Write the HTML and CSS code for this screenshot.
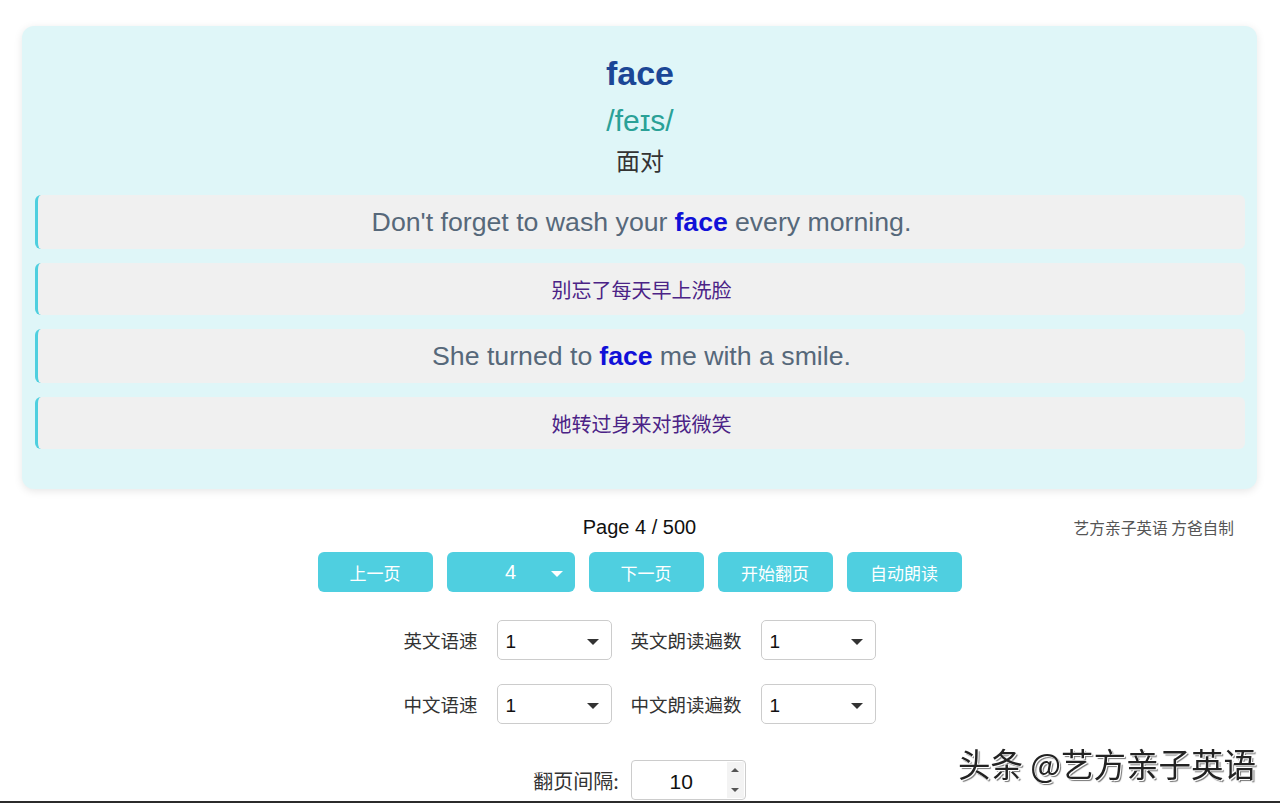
FILE: index.html
```html
<!doctype html>
<html>
<head>
  <title>Word Cards</title>
  <meta charset="utf-8">
  <link rel="stylesheet" href="styles.css">
</head>
<body>
  <div class="page">
    <div class="card">
      <div class="word">face</div>
      <div class="phonetic">/feɪs/</div>
      <div class="meaning">面对</div>
      <div class="row en">Don't forget to wash your <b>face</b> every morning.</div>
      <div class="row cn">别忘了每天早上洗脸</div>
      <div class="row en">She turned to <b>face</b> me with a smile.</div>
      <div class="row cn">她转过身来对我微笑</div>
    </div>

    <div class="info">
      <span></span>
      <span class="pageno">Page 4 / 500</span>
      <span class="credit">艺方亲子英语 方爸自制</span>
    </div>

    <div class="buttons">
      <div class="btn">上一页</div>
      <div class="btn pick">4<span class="caret white"></span></div>
      <div class="btn">下一页</div>
      <div class="btn">开始翻页</div>
      <div class="btn">自动朗读</div>
    </div>

    <div class="settings">
      <span class="label">英文语速</span>
      <div class="select">1<span class="caret"></span></div>
      <span class="label">英文朗读遍数</span>
      <div class="select">1<span class="caret"></span></div>
      <span class="label">中文语速</span>
      <div class="select">1<span class="caret"></span></div>
      <span class="label">中文朗读遍数</span>
      <div class="select">1<span class="caret"></span></div>
    </div>

    <div class="interval">
      <span class="label wide">翻页间隔:</span>
      <div class="number">
        <span class="val">10</span>
        <span class="spin"><i class="up"></i><i class="down"></i></span>
      </div>
    </div>
  </div>
  <div class="mark">头条 @艺方亲子英语</div>
  <div class="edge"></div>
</body>
</html>
```

FILE: styles.css
```css
body{
  margin: 0;
  background-color: #fff;
  font-family: "Liberation Sans", Arial, "Noto Sans CJK SC", sans-serif;
  overflow: hidden;
}
.page{
  padding: 26px 23px 0 22px;
}
.card{
  background-color: #dff6f8;
  border-radius: 12px;
  box-shadow: 0 2px 8px rgba(0,0,0,0.10);
  padding: 27px 12px 40px 13px;
  display: flex;
  flex-direction: column;
  align-items: stretch;
  text-align: center;
}
.word{
  font-size: 34px;
  line-height: 40px;
  font-weight: bold;
  color: #1b4696;
}
.phonetic{
  font-size: 30px;
  line-height: 34px;
  margin-top: 11px;
  color: #2aa197;
}
.meaning{
  font-size: 24px;
  line-height: 30px;
  margin-top: 7px;
  color: #333;
  font-family: "Noto Sans CJK SC", sans-serif;
}
.row{
  background-color: #f0f0f0;
  border-left: 3px solid #4ecfdf;
  border-radius: 6px;
  display: flex;
  align-items: center;
  justify-content: center;
  margin-top: 14px;
}
.meaning + .row{
  margin-top: 20px;
}
.row.en{
  height: 54px;
  font-size: 26.7px;
  color: #56687a;
}
.row.en b{
  color: #1010d8;
  margin: 0 7px;
}
.row.cn{
  height: 52px;
  font-size: 20px;
  color: #4b2386;
  font-family: "Noto Sans CJK SC", sans-serif;
}
.info{
  display: grid;
  grid-template-columns: 1fr auto 1fr;
  align-items: center;
  margin-top: 25px;
  height: 26px;
}
.pageno{
  font-size: 20px;
  color: #111;
}
.credit{
  justify-self: end;
  font-size: 15.7px;
  color: #555;
  margin-right: 23px;
  font-family: "Noto Sans CJK SC", sans-serif;
}
.buttons{
  display: flex;
  justify-content: center;
  gap: 14px;
  margin-top: 12px;
}
.btn{
  width: 115px;
  height: 40px;
  border-radius: 6px;
  background-color: #4fcfe0;
  color: #fff;
  font-size: 17px;
  display: flex;
  align-items: center;
  justify-content: center;
  font-family: "Noto Sans CJK SC", sans-serif;
}
.btn.pick{
  width: 128px;
  position: relative;
  font-family: "Liberation Sans", Arial, sans-serif;
  font-size: 20px;
}
.caret{
  position: absolute;
  right: 12px;
  top: 18px;
  width: 0;
  height: 0;
  border-left: 6px solid transparent;
  border-right: 6px solid transparent;
  border-top: 6px solid #333;
}
.caret.white{
  border-top-color: #fff;
  top: 19px;
}
.settings{
  display: grid;
  grid-template-columns: auto 115px auto 115px;
  column-gap: 19px;
  row-gap: 24px;
  justify-content: center;
  align-items: center;
  margin-top: 28px;
}
.label{
  font-size: 18.5px;
  color: #333;
  text-align: right;
  font-family: "Noto Sans CJK SC", sans-serif;
}
.label.wide{
  font-size: 20px;
}
.select{
  position: relative;
  height: 40px;
  border: 1px solid #ccc;
  border-radius: 5px;
  font-size: 19px;
  color: #111;
  display: flex;
  align-items: center;
  padding-left: 8px;
  padding-top: 3px;
  box-sizing: border-box;
}
.select .caret{
  top: 18px;
}
.interval{
  display: flex;
  justify-content: center;
  align-items: center;
  gap: 12px;
  margin-top: 36px;
}
.number{
  width: 115px;
  height: 40px;
  box-sizing: border-box;
  border: 1px solid #ccc;
  border-radius: 4px;
  display: flex;
  align-items: center;
}
.number .val{
  flex: 1;
  text-align: center;
  font-size: 21px;
  color: #111;
  padding-top: 3px;
  padding-left: 4px;
}
.spin{
  width: 17px;
  height: 36px;
  margin-right: 1px;
  background-color: #f3f3f3;
  display: flex;
  flex-direction: column;
  align-items: center;
  justify-content: space-between;
  padding: 6px 0;
  box-sizing: border-box;
}
.spin i{
  width: 0;
  height: 0;
  border-left: 4px solid transparent;
  border-right: 4px solid transparent;
}
.spin .up{
  border-bottom: 4px solid #555;
}
.spin .down{
  border-top: 4px solid #555;
}
.mark{
  position: fixed;
  right: 24px;
  bottom: 17px;
  font-size: 32.5px;
  color: #222;
  font-family: "Noto Sans CJK SC", sans-serif;
  text-shadow: 1px 1px 0 #fff, -1px -1px 0 #fff, 2px 2px 1px #777;
}
.edge{
  position: fixed;
  left: 0;
  right: 0;
  bottom: 0;
  height: 2px;
  background-color: #2b2b2b;
}
```
